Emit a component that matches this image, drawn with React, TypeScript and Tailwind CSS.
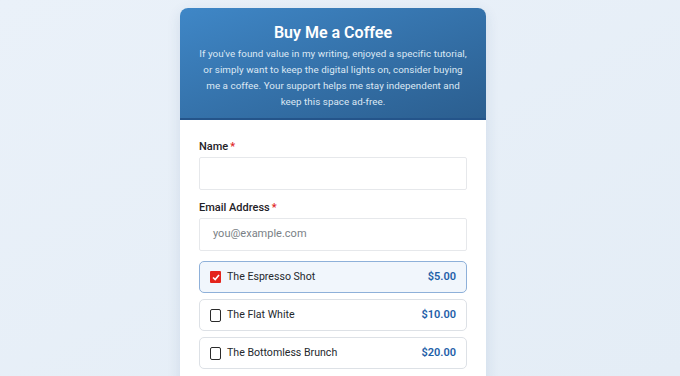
import React from "react";

const options = [
  { name: "The Espresso Shot", price: "$5.00", checked: true },
  { name: "The Flat White", price: "$10.00", checked: false },
  { name: "The Bottomless Brunch", price: "$20.00", checked: false },
];

export default function App() {
  return (
    <div
      className="w-[680px] h-[376px] overflow-hidden bg-gradient-to-br from-[#eaf1f9] to-[#e4edf6] pr-[14px] pt-[8px] flex justify-center"
      style={{ fontFamily: "Roboto, 'Noto Sans', sans-serif" }}
    >
      <div className="w-[306px] bg-white rounded-t-[8px] shadow-[0_4px_14px_rgba(30,70,120,0.12)] overflow-hidden self-start">
        <div className="bg-gradient-to-br from-[#3f87c7] to-[#2b5e8f] border-b-2 border-[#24548a] px-2 pt-[14px] pb-[8px] text-center">
          <h1 className="text-white font-semibold text-[16px] leading-[22px]">Buy Me a Coffee</h1>
          <p className="mt-[2px] text-[#dce8f4] text-[9.8px] leading-[16px] whitespace-nowrap tracking-[0.05px]">
            If you've found value in my writing, enjoyed a specific tutorial,
            <br />
            or simply want to keep the digital lights on, consider buying
            <br />
            me a coffee. Your support helps me stay independent and
            <br />
            keep this space ad-free.
          </p>
        </div>
        <div className="px-[19px] pt-[20px] pb-4">
          <label className="block text-[11px] font-medium text-[#1f2328] leading-[14px]">
            Name<span className="text-[#e02424] ml-[2px]">*</span>
          </label>
          <div className="mt-[3px] h-[33px] border border-[#e6e8eb] rounded-[2px]" />
          <label className="block mt-[11px] text-[11px] font-medium text-[#1f2328] leading-[14px]">
            Email Address<span className="text-[#e02424] ml-[2px]">*</span>
          </label>
          <div className="mt-[3px] h-[33px] border border-[#e6e8eb] rounded-[2px] flex items-center px-[13px] text-[11px] text-[#7a7f86]">
            you@example.com
          </div>
          <div className="mt-[10px] flex flex-col gap-[6px]">
            {options.map((o) => (
              <div
                key={o.name}
                className={
                  o.checked
                    ? "h-[32px] rounded-[5px] border border-[#8eb0d9] bg-[#f1f6fc] flex items-center pl-[10px] pr-[10px]"
                    : "h-[32px] rounded-[5px] border border-[#dde1e6] bg-white flex items-center pl-[10px] pr-[10px]"
                }
              >
                {o.checked ? (
                  <span className="w-[11px] h-[12px] rounded-[1px] bg-[#e4241c] flex items-center justify-center">
                    <svg width="8" height="7" viewBox="0 0 8 7">
                      <path d="M1 3.5 L3.2 5.5 L7 1" stroke="white" strokeWidth="1.6" fill="none" />
                    </svg>
                  </span>
                ) : (
                  <span className="w-[11px] h-[13px] rounded-[2px] border-[1.5px] border-[#2a2a2a] bg-white" />
                )}
                <span className="ml-[6px] text-[10.6px] text-[#24282d]">{o.name}</span>
                <span className="ml-auto text-[11px] font-semibold text-[#1e60a8]">{o.price}</span>
              </div>
            ))}
          </div>
        </div>
      </div>
    </div>
  );
}
